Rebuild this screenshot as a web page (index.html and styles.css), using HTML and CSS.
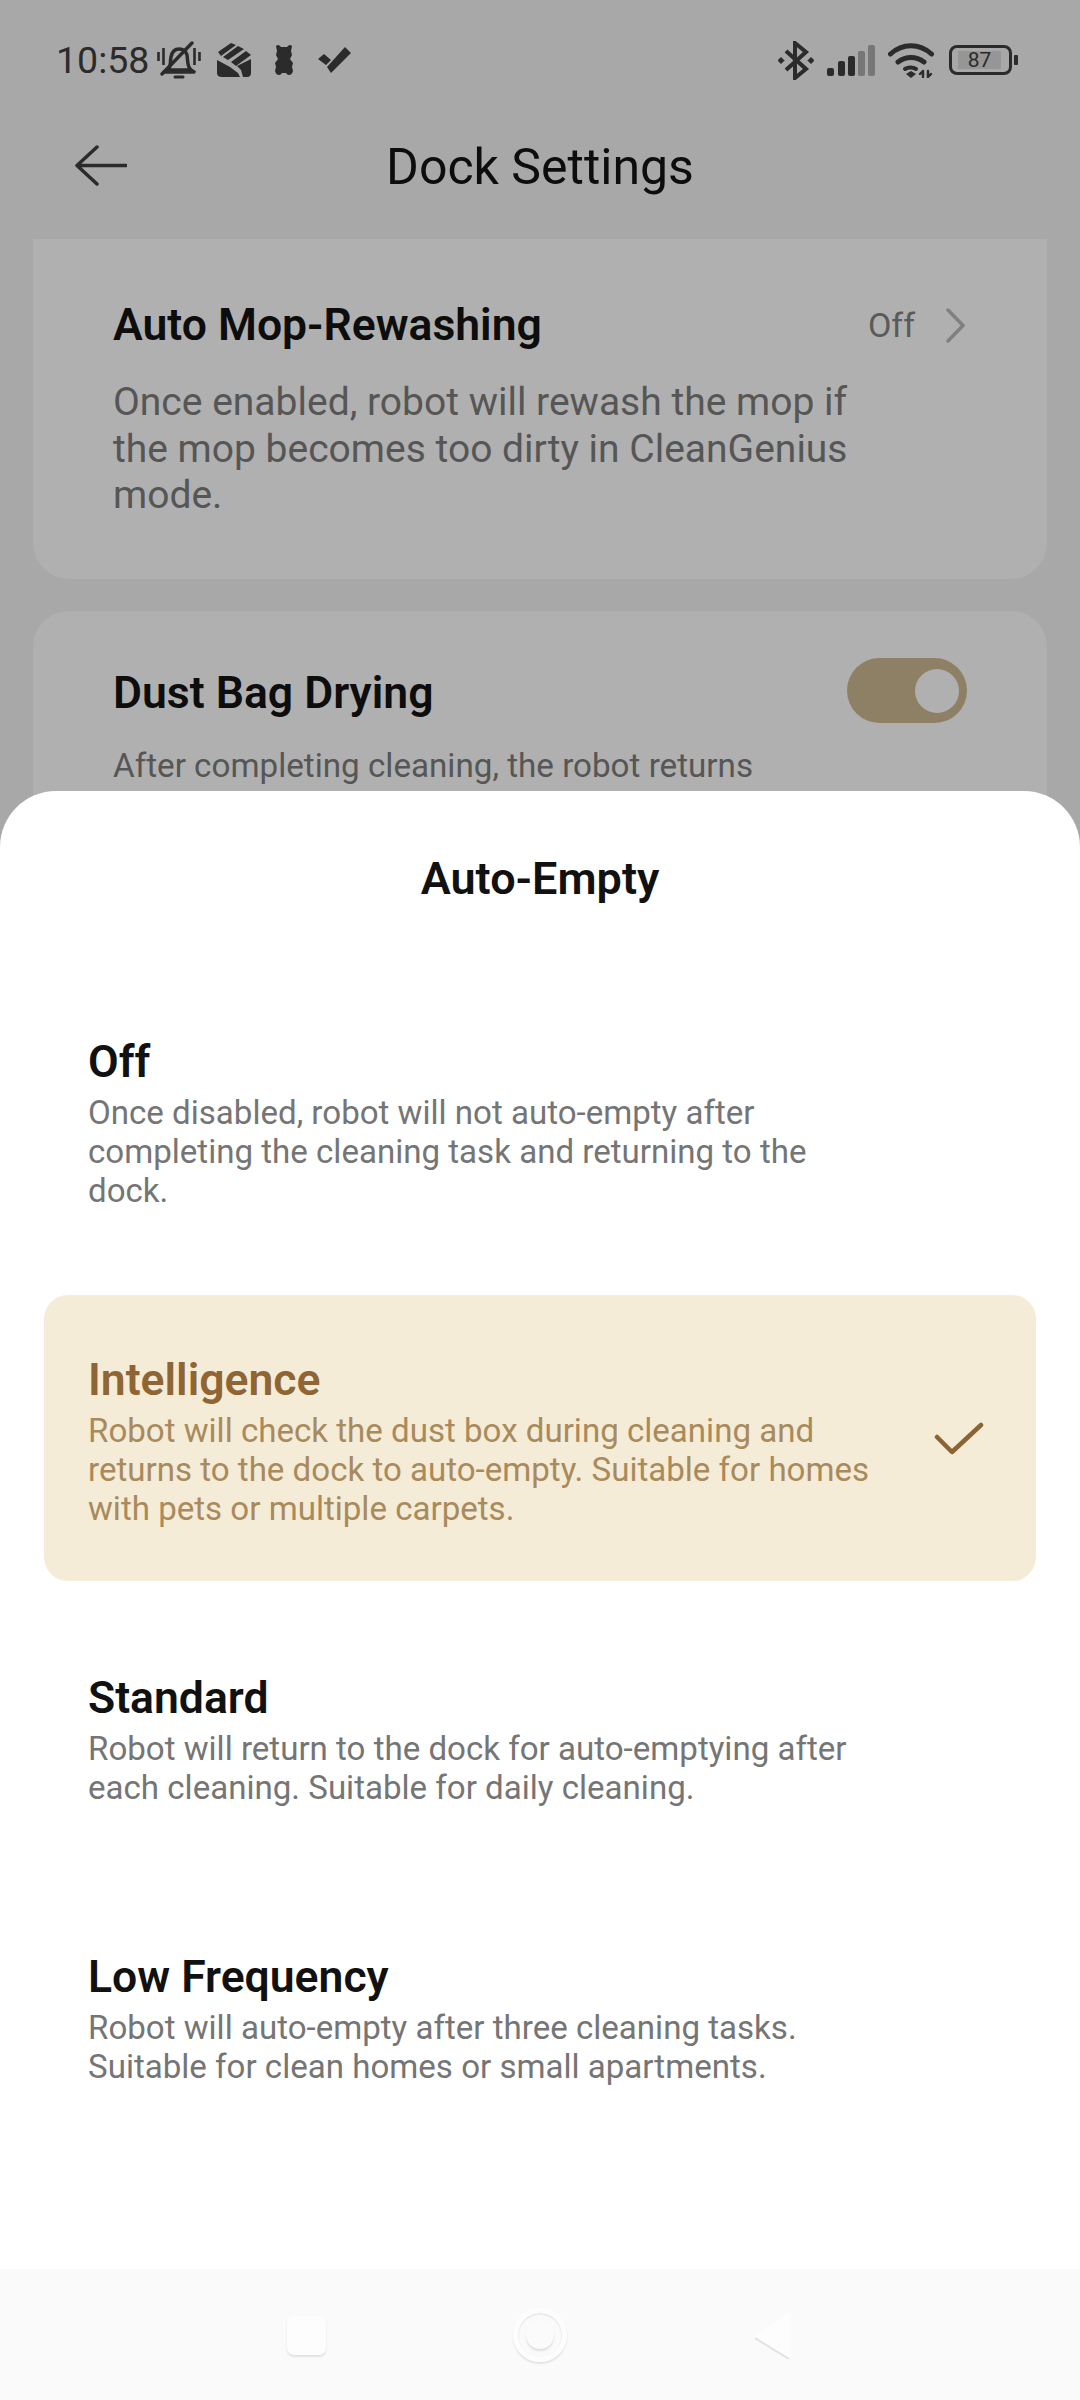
FILE: index.html
```html
<!DOCTYPE html>
<html lang="en">
<head>
<meta charset="UTF-8">
<meta name="viewport" content="width=device-width, initial-scale=1.0">
<title>Dock Settings</title>
<link rel="stylesheet" href="styles.css">
</head>
<body>
<div class="screen">
  <div class="status-bar">
    <div class="status-left">
      <span class="time">10:58</span>
      <svg class="ic-bell" viewBox="0 0 44 38" fill="none" stroke="#2b2b2b">
        <path d="M11 29c3-3 2-8 3-13 1-5 4-8 8-8s7 2 8 6c1 6 0 12 4 15z" stroke-width="3.500"/>
        <path d="M7 31h30" stroke-width="3.500" stroke-linecap="round"/>
        <path d="M18 36h8" stroke-width="3" stroke-linecap="round"/>
        <path d="M1.500 11v9M6.500 7v17M37.500 7v17M42.500 11v9" stroke-width="2.600"/>
        <path d="M5 33L35 2" stroke-width="3.400" stroke-linecap="round"/>
      </svg>
      <svg class="ic-mail" viewBox="0 0 34 34" fill="#2b2b2b">
        <path d="M0 17l13 7 8 6 2 4H5q-5 0-5-4z"/>
        <path d="M34 16v14q0 4-4 4h-4l-2-7-4-4z"/>
        <path d="M1 9L14 0l5 2L4 13zM6 14L21 3l6 3-16 11zM14 19L29 8l5 4-15 11z"/>
      </svg>
      <svg class="ic-bear" viewBox="0 0 18 30" fill="#2b2b2b">
        <path d="M1 1q2-2 4 0l1 1h6l1-1q2-2 4 0l-1 5 1 4-2 4 3 4-1 4 1 4q-1 4-4 4-2 0-3-2H7q-1 2-3 2-3 0-4-4l1-4-1-4 3-4-2-4 1-4z"/>
      </svg>
      <svg class="ic-tick" viewBox="0 0 33 26" fill="#2b2b2b">
        <path d="M0 12l6-5 7 6-5 5zM9 20L27 0l6 6-20 20z"/>
      </svg>
    </div>
    <div class="status-right">
      <svg class="ic-bt" viewBox="0 0 36 39" fill="none" stroke="#2b2b2b" stroke-width="4">
        <path d="M8 10l20 18-11 9V2l11 9L8 29"/>
        <path d="M0 19.500l3-3 3 3-3 3zM30 19.500l3-3 3 3-3 3z" fill="#2b2b2b" stroke-width="1"/>
      </svg>
      <svg class="ic-signal" viewBox="0 0 48 31">
        <rect x="0" y="23" width="7" height="8" rx="2" fill="#2b2b2b"/>
        <rect x="11" y="16" width="7" height="15" rx="2" fill="#2b2b2b"/>
        <rect x="21" y="11" width="7" height="20" rx="2" fill="#2b2b2b"/>
        <rect x="31" y="6" width="7" height="25" rx="2" fill="#777"/>
        <rect x="41" y="0" width="7" height="31" rx="2" fill="#777"/>
      </svg>
      <svg class="ic-wifi" viewBox="0 0 46 35" fill="none" stroke="#2b2b2b" stroke-width="5" stroke-linecap="round">
        <path d="M2.500 11c12-11 29-11 41 0"/>
        <path d="M10 19c8-6 18-6 26 0"/>
        <path d="M17 26c3-2 8-2 11 0" stroke-width="4"/>
        <path d="M18 31l5-3 5 3-5 4z" fill="#2b2b2b" stroke="none"/>
        <path d="M35 28v6M32 31l3-3M40 28v6l3-3" stroke-width="2.400"/>
      </svg>
      <div class="battery">
        <div class="battery-body"><span class="battery-level">87</span></div>
        <div class="battery-nub"></div>
      </div>
    </div>
  </div>

  <div class="top-bar">
    <svg class="ic-back" viewBox="0 0 52 41" fill="none" stroke="#2b2b2b" stroke-width="3.500" stroke-linecap="round" stroke-linejoin="round">
      <path d="M51 20.500H2M22 2L2 20.500 22 39"/>
    </svg>
    <h1 class="page-title">Dock Settings</h1>
  </div>

  <div class="settings">
    <div class="card card-mop">
      <div class="card-head">
        <h2 class="card-title">Auto Mop-Rewashing</h2>
        <div class="card-value">
          <span>Off</span>
          <svg class="ic-chevron" viewBox="0 0 20 35" fill="none" stroke="#808080" stroke-width="3.500" stroke-linecap="round" stroke-linejoin="round">
            <path d="M3 2l15 15.500L3 33"/>
          </svg>
        </div>
      </div>
      <p class="card-desc">Once enabled, robot will rewash the mop if the mop becomes too dirty in CleanGenius mode.</p>
    </div>
    <div class="card card-dust">
      <div class="card-head">
        <h2 class="card-title">Dust Bag Drying</h2>
        <div class="toggle"><div class="toggle-thumb"></div></div>
      </div>
      <p class="card-desc dust-desc">After completing cleaning, the robot returns to the dock and dries the dust bag.</p>
    </div>
  </div>

  <div class="sheet">
    <h2 class="sheet-title">Auto-Empty</h2>
    <div class="options">
      <div class="option">
        <div class="option-text">
          <h3>Off</h3>
          <p>Once disabled, robot will not auto-empty after completing the cleaning task and returning to the dock.</p>
        </div>
      </div>
      <div class="option selected">
        <div class="option-text">
          <h3>Intelligence</h3>
          <p>Robot will check the dust box during cleaning and returns to the dock to auto-empty. Suitable for homes with pets or multiple carpets.</p>
        </div>
        <svg class="ic-check" viewBox="0 0 50 33" fill="none" stroke="#8c6432" stroke-width="4.500" stroke-linecap="round" stroke-linejoin="round">
          <path d="M3 15l15 15L47 3"/>
        </svg>
      </div>
      <div class="option">
        <div class="option-text">
          <h3>Standard</h3>
          <p>Robot will return to the dock for auto-emptying after each cleaning. Suitable for daily cleaning.</p>
        </div>
      </div>
      <div class="option">
        <div class="option-text">
          <h3>Low Frequency</h3>
          <p>Robot will auto-empty after three cleaning tasks. Suitable for clean homes or small apartments.</p>
        </div>
      </div>
    </div>
    <div class="nav-bar">
      <div class="nav-square"></div>
      <div class="nav-home"><div class="nav-home-dot"></div></div>
      <svg class="nav-back" viewBox="0 0 38 47">
        <path d="M36 2L2 24l34 21z" fill="#fdfdfd" stroke="#fdfdfd" stroke-width="3" stroke-linejoin="round"/>
        <path d="M2 26l34 21" fill="none" stroke="#e2e2e2" stroke-width="2"/>
      </svg>
    </div>
  </div>
</div>
</body>
</html>
```

FILE: styles.css
```css
* {
  box-sizing: border-box;
}
html, body {
  margin: 0;
  padding: 0;
}
body {
  font-family: Roboto, "Noto Sans", Arial, sans-serif;
  width: 1080px;
  height: 2400px;
  overflow: hidden;
}
h1, h2, h3, p {
  margin: 0;
}
svg {
  display: block;
  flex: none;
}
.screen {
  position: relative;
  width: 1080px;
  height: 2400px;
  overflow: hidden;
  background-color: #a8a8a8;
}

/* status bar */
.status-bar {
  height: 120px;
  display: flex;
  justify-content: space-between;
  align-items: center;
  padding: 0 62px 0 56px;
}
.status-left, .status-right {
  display: flex;
  align-items: center;
}
.time {
  font-size: 37.500px;
  color: #2b2b2b;
  line-height: 44px;
  width: 101px;
}
.ic-bell {
  width: 44px;
  height: 38px;
}
.ic-mail {
  width: 34px;
  height: 34px;
  margin-left: 16px;
}
.ic-bear {
  width: 18px;
  height: 30px;
  margin-left: 24px;
}
.ic-tick {
  width: 33px;
  height: 26px;
  margin-left: 25px;
}
.ic-bt {
  width: 36px;
  height: 39px;
}
.ic-signal {
  width: 48px;
  height: 31px;
  margin-left: 13px;
}
.ic-wifi {
  width: 46px;
  height: 35px;
  margin-left: 13px;
}
.battery {
  display: flex;
  align-items: center;
  margin-left: 15px;
}
.battery-body {
  width: 63px;
  height: 30px;
  border: 3px solid #2b2b2b;
  border-radius: 8px;
  padding: 3px;
}
.battery-level {
  display: block;
  width: 43px;
  height: 18px;
  margin-left: 3px;
  background-color: #969696;
  color: #2b2b2b;
  font-size: 21px;
  line-height: 18px;
  text-align: center;
}
.battery-nub {
  width: 4px;
  height: 10px;
  margin-left: 2px;
  background-color: #2b2b2b;
  border-radius: 1px;
}

/* top bar */
.top-bar {
  position: relative;
  height: 119px;
  display: flex;
  align-items: center;
  justify-content: center;
  padding-bottom: 26px;
}
.ic-back {
  position: absolute;
  left: 75px;
  top: 25px;
  width: 52px;
  height: 41px;
}
.page-title {
  font-size: 50px;
  font-weight: 400;
  color: #0d0d0d;
  line-height: 56px;
}

/* settings behind the sheet */
.settings {
  padding: 0 33px;
  display: flex;
  flex-direction: column;
  gap: 32px;
}
.card {
  background-color: #b0b0b0;
  padding: 60px 80px;
  border-radius: 36px;
}
.card-mop {
  height: 340px;
  border-radius: 0 0 36px 36px;
  padding-top: 60px;
}
.card-dust {
  height: 400px;
  padding-top: 47px;
}
.card-head {
  display: flex;
  justify-content: space-between;
  align-items: center;
}
.card-title {
  font-size: 44.500px;
  font-weight: 600;
  color: #0d0d0d;
  line-height: 52px;
}
.card-dust .card-title {
  padding-top: 5px;
}
.card-value {
  display: flex;
  align-items: center;
  gap: 30px;
  font-size: 34px;
  color: #5a5a5a;
  margin-right: 2px;
}
.ic-chevron {
  width: 20px;
  height: 35px;
}
.card-desc {
  margin-top: 28px;
  font-size: 39px;
  line-height: 46.700px;
  color: #565656;
  max-width: 760px;
}
.dust-desc {
  font-size: 33.200px;
  margin-top: 20px;
  max-width: 670px;
}
.toggle {
  width: 120px;
  height: 65px;
  border-radius: 33px;
  background-color: #8e8065;
  display: flex;
  align-items: center;
  justify-content: flex-end;
  padding-right: 8px;
}
.toggle-thumb {
  width: 44px;
  height: 44px;
  border-radius: 50%;
  background-color: #b0b0b0;
}

/* bottom sheet */
.sheet {
  position: absolute;
  left: 0;
  right: 0;
  top: 791px;
  bottom: 0;
  background-color: #fff;
  border-radius: 56px 56px 0 0;
  display: flex;
  flex-direction: column;
}
.sheet-title {
  font-size: 45px;
  font-weight: 600;
  color: #111;
  line-height: 50px;
  text-align: center;
  padding-top: 63px;
  height: 186px;
}
.options {
  flex: 1;
  display: flex;
  flex-direction: column;
  gap: 32px;
  padding: 0 44px;
}
.option {
  display: flex;
  align-items: center;
  justify-content: space-between;
  padding: 60px 44px 53px;
  border-radius: 24px;
}
.option-text {
  width: 790px;
}
.option h3 {
  font-size: 44.500px;
  font-weight: 600;
  color: #111;
  line-height: 50px;
}
.option p {
  margin-top: 6px;
  font-size: 33.100px;
  line-height: 39px;
  color: #757575;
}
.selected {
  background-color: #f5ecd7;
}
.selected h3 {
  color: #8f6534;
}
.selected p {
  color: #a98a5c;
}
.ic-check {
  width: 50px;
  height: 33px;
  margin-right: 8px;
  margin-bottom: 6px;
}

/* nav bar */
.nav-bar {
  height: 131px;
  background-color: #fafafa;
  position: relative;
}
.nav-square {
  position: absolute;
  left: 287px;
  top: 47px;
  width: 39px;
  height: 39px;
  background-color: #fdfdfd;
  border-radius: 7px;
  box-shadow: 0 2px 2px #e2e2e2;
}
.nav-home {
  position: absolute;
  left: 513px;
  top: 39px;
  width: 54px;
  height: 54px;
  border-radius: 50%;
  border: 5px solid #fdfdfd;
  box-shadow: 0 2px 2px #e2e2e2, inset 0 1px 2px #dcdcdc;
  display: flex;
  align-items: center;
  justify-content: center;
}
.nav-home-dot {
  width: 28px;
  height: 28px;
  border-radius: 50%;
  background-color: #fbfbfb;
  box-shadow: 0 2px 2px #dedede;
}
.nav-back {
  position: absolute;
  left: 753px;
  top: 43px;
  width: 38px;
  height: 47px;
}
```
